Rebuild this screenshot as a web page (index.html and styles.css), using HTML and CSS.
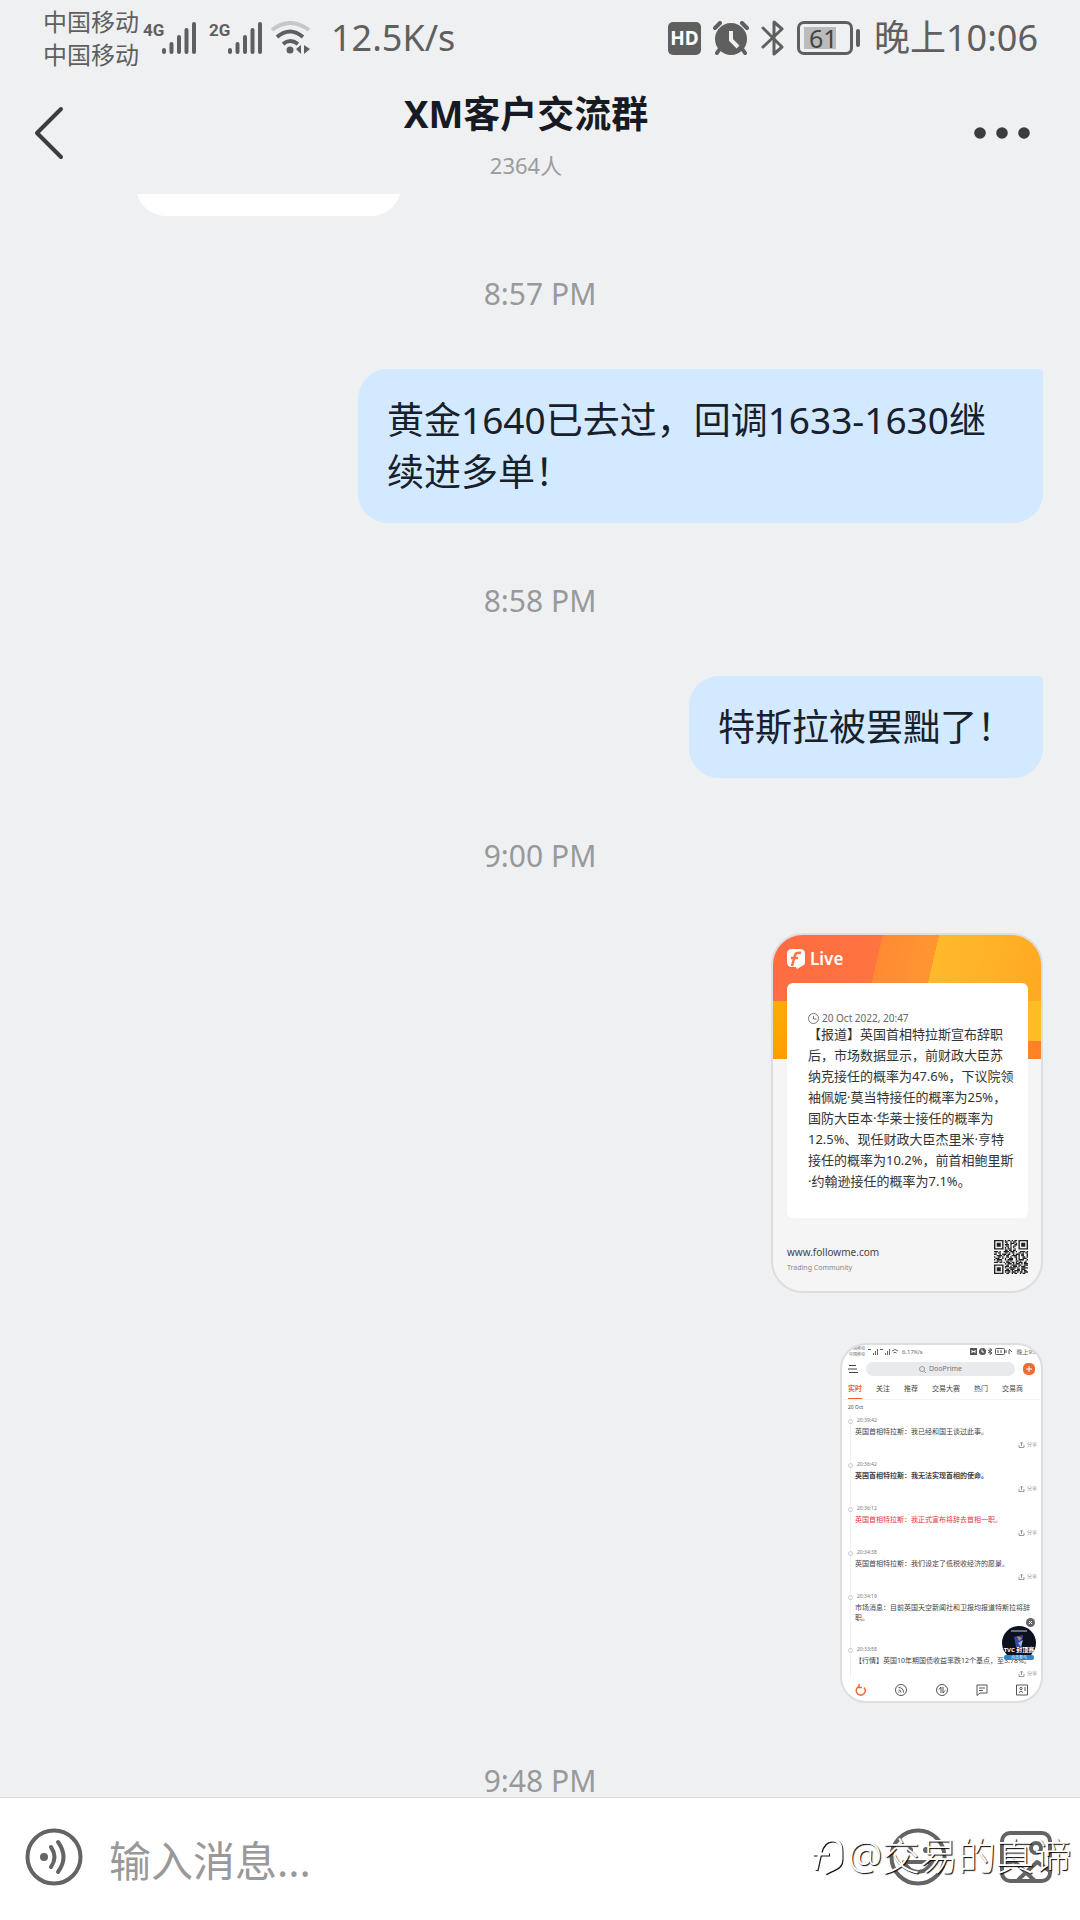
FILE: index.html
```html
<!DOCTYPE html>
<html lang="zh-CN">
<head>
<meta charset="utf-8">
<meta name="viewport" content="width=device-width, initial-scale=1">
<title>XM客户交流群</title>
<link rel="stylesheet" href="styles.css">
</head>
<body>
<div class="status">
  <div class="carriers"><span>中国移动</span><span>中国移动</span></div>
  <svg class="signal" width="54" height="34" viewBox="0 0 54 34" aria-hidden="true"><text x="0" y="15">4G</text><g class="bars"><path d="M21 29v2M28.500 23v8M36 16v15M43.500 9v22M51 3v28"/></g></svg>
  <svg class="signal second" width="54" height="34" viewBox="0 0 54 34" aria-hidden="true"><text x="0" y="15">2G</text><g class="bars"><path d="M21 29v2M28.500 23v8M36 16v15M43.500 9v22M51 3v28"/></g></svg>
  <svg class="wifi" width="40" height="34" viewBox="0 0 40 34" fill="none" stroke="#5f5f5f" stroke-width="4" aria-hidden="true"><path d="M1 9Q19-5 38 9" stroke="#c6c7c8"/><path d="M6 16Q19 5 32 16M12 23Q19 17 27 23"/><circle cx="19" cy="29" r="3.500" fill="#5f5f5f" stroke="none"/><path d="M30 24v9l-5-5zM33 24v9l6-5z" fill="#5f5f5f" stroke="none"/></svg>
  <span class="speed">12.5K/s</span>
  <div class="status-right">
    <span class="hd">HD</span>
    <svg width="36" height="34" viewBox="0 0 36 34" aria-hidden="true"><circle cx="18" cy="18" r="16" fill="#5f5f5f"/><path d="M2 7l5-5M34 7l-5-5M6 29l-2 3M30 29l2 3" stroke="#5f5f5f" stroke-width="4" stroke-linecap="round"/><path d="M18 10v9l7 7" fill="none" stroke="#eff0f2" stroke-width="4"/></svg>
    <svg width="24" height="36" viewBox="0 0 24 36" fill="none" stroke="#5f5f5f" stroke-width="3" stroke-linejoin="round" stroke-linecap="round" aria-hidden="true"><path d="M2 8l19 19-8 7V2l8 7L2 27"/></svg>
    <div class="battery"><span class="cell">61</span><i></i></div>
    <span class="clock">晚上10:06</span>
  </div>
</div>

<header class="header">
  <button class="back" aria-label="返回"><svg width="30" height="54" viewBox="0 0 30 54" fill="none" stroke="#3c3c3c" stroke-width="4" stroke-linecap="round" stroke-linejoin="round"><path d="M27 3L3 27l24 24"/></svg></button>
  <div class="heading"><h1>XM客户交流群</h1><p>2364人</p></div>
  <button class="more" aria-label="更多"><svg width="56" height="12" viewBox="0 0 56 12" fill="#3c3c3c"><circle cx="6" cy="6" r="5.800"/><circle cx="28" cy="6" r="5.800"/><circle cx="50" cy="6" r="5.800"/></svg></button>
</header>

<main class="chat">
  <div class="incoming"></div>
  <time>8:57 PM</time>
  <p class="bubble">黄金1640已去过，回调1633-1630继续进多单！</p>
  <time>8:58 PM</time>
  <p class="bubble">特斯拉被罢黜了！</p>
  <time>9:00 PM</time>

  <article class="live">
    <div class="live-brand">
      <svg width="18" height="20" viewBox="0 0 18 20" aria-hidden="true"><path d="M5 0h8q5 0 5 5v8q0 3-3 4l-5 3-1-2H5q-5 0-5-5V5q0-5 5-5z" fill="#fff"/><path d="M5 17l3-11q1-3 6-2M4 9h7" fill="none" stroke="#ff7440" stroke-width="2.500"/></svg>
      <span>Live</span>
    </div>
    <div class="live-panel">
      <div class="live-date"><svg width="11" height="11" viewBox="0 0 11 11" fill="none" stroke="#777" aria-hidden="true"><circle cx="5.500" cy="5.500" r="5"/><path d="M5.500 3v3h3"/></svg><span>20 Oct 2022, 20:47</span></div>
      <p>【报道】英国首相特拉斯宣布辞职<br>后，市场数据显示，前财政大臣苏<br>纳克接任的概率为47.6%，下议院领<br>袖佩妮·莫当特接任的概率为25%，<br>国防大臣本·华莱士接任的概率为<br>12.5%、现任财政大臣杰里米·亨特<br>接任的概率为10.2%，前首相鲍里斯<br>·约翰逊接任的概率为7.1%。</p>
    </div>
    <div class="live-foot">
      <div><a href="#">www.followme.com</a><small>Trading Community</small></div>
      <svg width="34" height="34" viewBox="0 0 25 25" aria-hidden="true" fill="none" stroke="#222">
        <g><path d="M8 .5h9" stroke-dasharray="1 1 2 1"/><path d="M8 1.500h9" stroke-dasharray="2 2 1 1"/><path d="M9 2.500h8" stroke-dasharray="1 2 3 1"/><path d="M8 3.500h9" stroke-dasharray="3 1 1 2"/><path d="M9 4.500h8" stroke-dasharray="2 1 1 1"/><path d="M8 5.500h8" stroke-dasharray="1 1"/><path d="M8 6.500h9" stroke-dasharray="1 1 3 2"/><path d="M8 7.500h8" stroke-dasharray="2 1"/>
        <path d="M0 8.500h25" stroke-dasharray="3 1 1 2 4 1"/><path d="M1 9.500h24" stroke-dasharray="1 1 2 3 2 1"/><path d="M0 10.500h25" stroke-dasharray="2 2 1 1 3 1"/><path d="M2 11.500h23" stroke-dasharray="4 1 1 1 2 2"/><path d="M0 12.500h25" stroke-dasharray="1 2 2 1"/><path d="M1 13.500h24" stroke-dasharray="3 2 1 1 1 2"/><path d="M0 14.500h25" stroke-dasharray="1 1 4 2"/><path d="M2 15.500h22" stroke-dasharray="2 1 1 3"/><path d="M0 16.500h25" stroke-dasharray="3 1 2 1 1 1"/>
        <path d="M8 17.500h17" stroke-dasharray="1 1 3 1"/><path d="M9 18.500h16" stroke-dasharray="2 2 4 1"/><path d="M8 19.500h16" stroke-dasharray="3 1 1 1"/><path d="M8 20.500h17" stroke-dasharray="1 2 5 1"/><path d="M9 21.500h16" stroke-dasharray="2 1 3 2"/><path d="M8 22.500h16" stroke-dasharray="4 1 1 1"/><path d="M8 23.500h17" stroke-dasharray="1 1 2 1 3 1"/><path d="M9 24.500h15" stroke-dasharray="2 2 1 1"/></g>
        <path d="M.5.500h6v6h-6zM18.500.500h6v6h-6zM.5 18.500h6v6h-6z"/><path d="M2 2h3v3H2zM20 2h3v3h-3zM2 20h3v3H2z" fill="#222" stroke="none"/>
      </svg>
    </div>
  </article>

  <article class="shot">
    <div class="shot-status">
      <div class="shot-carriers"><span>中国移动</span><span>中国移动</span></div>
      <svg width="31" height="7" viewBox="0 0 31 7" fill="none" stroke="#666" aria-hidden="true"><path d="M0 1.500h3M5.500 7V5M7.500 7V3M9.500 7V1M12 1.500h3M17.500 7V5M19.500 7V3M21.500 7V1M24 3q3-3 6 0M25.500 5q1.500-1.500 3 0"/></svg>
      <span>6.17K/s</span>
      <svg class="shot-icons" width="44" height="7" viewBox="0 0 44 7" fill="none" stroke="#555" aria-hidden="true"><path d="M0 0h7v7H0z" fill="#555" stroke="none"/><path d="M2 2v3M5 2v3M2 3.500h3" stroke="#fff"/><circle cx="12.500" cy="3.500" r="3.500" fill="#555" stroke="none"/><path d="M12 1.500v2.500h2" stroke="#fff"/><path d="M18 2l4 3-2 1.500v-6L22 2l-4 3"/><rect x="25.500" y=".5" width="9" height="6" rx="1"/><path d="M28 2v3M31 2v3M36 2v3M39 1l3 3M39 6V2"/></svg>
      <span>晚上9:0</span>
    </div>
    <div class="shot-search">
      <svg width="10" height="10" viewBox="0 0 10 10" stroke="#444" aria-hidden="true"><path d="M1 1.500h7M0 5h9M1 8.500h9"/></svg>
      <div class="shot-field"><svg width="7" height="7" viewBox="0 0 7 7" fill="none" stroke="#999" aria-hidden="true"><circle cx="3" cy="3" r="2.500"/><path d="M5 5l2 2"/></svg><span>DooPrime</span></div>
      <span class="plus"><svg width="12" height="12" viewBox="0 0 12 12" aria-hidden="true"><rect width="12" height="12" rx="5" fill="#f36b32"/><path d="M6 3v6M3 6h6" stroke="#fff"/></svg></span>
    </div>
    <nav class="shot-tabs"><b>实时</b><span>关注</span><span>推荐</span><span>交易大赛</span><span>热门</span><span>交易商</span></nav>
    <div class="shot-day">20 Oct</div>
    <ul class="feed">
      <li><i>20:39:42</i><p>英国首相特拉斯：我已经和国王谈过此事。</p><span class="share"><svg width="7" height="7" viewBox="0 0 7 7"><path d="M1 4v2.500h5V4M3.500 5V1M2 2.500L3.500 1 5 2.500"/></svg>分享</span></li>
      <li><i>20:36:42</i><p class="strong">英国首相特拉斯：我无法实现首相的使命。</p><span class="share"><svg width="7" height="7" viewBox="0 0 7 7"><path d="M1 4v2.500h5V4M3.500 5V1M2 2.500L3.500 1 5 2.500"/></svg>分享</span></li>
      <li><i>20:36:12</i><p class="alert">英国首相特拉斯：我正式宣布将辞去首相一职。</p><span class="share"><svg width="7" height="7" viewBox="0 0 7 7"><path d="M1 4v2.500h5V4M3.500 5V1M2 2.500L3.500 1 5 2.500"/></svg>分享</span></li>
      <li><i>20:34:38</i><p>英国首相特拉斯：我们设定了低税收经济的愿景。</p><span class="share"><svg width="7" height="7" viewBox="0 0 7 7"><path d="M1 4v2.500h5V4M3.500 5V1M2 2.500L3.500 1 5 2.500"/></svg>分享</span></li>
      <li class="long"><i>20:34:19</i><p>市场消息：目前英国天空新闻社和卫报均报道特斯拉将辞职。</p></li>
      <li><i>20:33:58</i><p class="one">【行情】英国10年期国债收益率跌12个基点，至3.78%。</p><span class="share"><svg width="7" height="7" viewBox="0 0 7 7"><path d="M1 4v2.500h5V4M3.500 5V1M2 2.500L3.500 1 5 2.500"/></svg>分享</span></li>
    </ul>
    <div class="shot-nav">
      <svg viewBox="0 0 12 12" aria-hidden="true"><path d="M4 2.500a4.500 4.500 0 1 0 5 1M4 0v3.500h3" stroke="#ee6a3c" stroke-width="1.500"/></svg>
      <svg viewBox="0 0 12 12" aria-hidden="true"><circle cx="6" cy="6" r="5.500"/><path d="M3.500 3.500q5 0 5 5M3.500 6q2.500 0 2.500 2.500M3.500 8h1"/></svg>
      <svg viewBox="0 0 12 12" aria-hidden="true"><circle cx="6" cy="6" r="5.500"/><path d="M5 9V3L3 5.500M7 3v6l2-2.500"/></svg>
      <svg viewBox="0 0 12 12" aria-hidden="true"><path d="M1 1h10v8H4l-3 2.500zM3 4h6M3 6.500h4"/></svg>
      <svg viewBox="0 0 12 12" aria-hidden="true"><path d="M.5 1h11v10H.500zM3 8.500q2-3 4 0M8 4h2M8 6h2"/><circle cx="5" cy="4.500" r="1.200"/></svg>
    </div>
    <div class="promo"><svg width="34" height="34" viewBox="0 0 34 34" aria-hidden="true"><circle cx="17" cy="17" r="17" fill="#0c1120"/><path d="M9 5h16" stroke="#ccc"/><path d="M12 11l9-2-2 13-5-1z" fill="#314a9b"/><path d="M15 10l5 2-3 3z" fill="#df7b68"/><path d="M16 17l5-3-2 7z" fill="#91bde8"/></svg><b>TVC 封顶赛</b><em>点击参与</em></div>
    <svg class="promo-close" width="9" height="9" viewBox="0 0 9 9" aria-hidden="true"><circle cx="4.500" cy="4.500" r="4.500" fill="#666"/><path d="M3 3l3 3M6 3L3 6" stroke="#fff"/></svg>
  </article>
  <time>9:48 PM</time>
</main>

<footer class="composer">
  <button aria-label="语音"><svg width="58" height="58" viewBox="0 0 58 58" fill="none" stroke="#646464" stroke-width="4" stroke-linecap="round"><circle cx="29" cy="29" r="26.500"/><circle cx="19" cy="29" r="4" fill="#646464" stroke="none"/><path d="M26 19q7 10 0 20M33 14q11 15 0 30"/></svg></button>
  <input type="text" aria-label="输入消息" placeholder="输入消息...">
  <button aria-label="表情"><svg width="58" height="58" viewBox="0 0 58 58" fill="none" stroke="#646464" stroke-width="4" stroke-linecap="round"><circle cx="29" cy="29" r="26.500"/><circle cx="21" cy="22" r="3" fill="#646464" stroke="none"/><circle cx="37" cy="22" r="3" fill="#646464" stroke="none"/><path d="M15 34h28q-5 10-14 10t-14-10"/></svg></button>
  <button aria-label="图片"><svg width="52" height="52" viewBox="0 0 52 52" fill="none" stroke="#646464" stroke-width="4" stroke-linejoin="round"><rect x="2" y="2" width="48" height="48" rx="8"/><circle cx="36" cy="17" r="5"/><path d="M2 35l12-5 21 20M18 49l19-18 13 9"/></svg></button>
  <div class="watermark"><svg width="34" height="44" viewBox="0 0 34 44" fill="none" aria-hidden="true"><path d="M5 38l4-18q3-12 12-12 9 0 9 11v8q0 7-8 10l-8 4M2 22h16" stroke="#111" stroke-width="3"/><path d="M4 37l4-18q3-12 12-12 9 0 9 11v8q0 7-8 10l-8 4M1 21h16" stroke="#fff" stroke-width="3"/></svg><span>@交易的真谛</span></div>
</footer>
</body>
</html>
```
FILE: styles.css
```css
* { box-sizing: border-box; }
body {
  margin: 0;
  min-height: 100vh;
  display: flex;
  flex-direction: column;
  background: #eff0f2;
  color: #17202b;
  font-family: "Noto Sans", "Noto Sans CJK SC", sans-serif;
}
h1, p, ul { margin: 0; padding: 0; }
button { border: 0; padding: 0; background: none; display: flex; align-items: center; }
svg { display: block; flex: none; }

.status {
  height: 76px;
  padding: 3px 42px 3px 43px;
  display: flex;
  align-items: center;
  color: #5f5f5f;
  font-size: 36px;
  line-height: 40px;
  white-space: nowrap;
}
.carriers { display: flex; flex-direction: column; font-size: 24px; line-height: 33px; }
.signal { margin-left: 4px; fill: #5f5f5f; font-size: 17px; font-weight: 700; font-family: "Liberation Sans Narrow", "Roboto", sans-serif; }
.second { margin-left: 12px; }
.bars { stroke: #5f5f5f; stroke-width: 4; stroke-linecap: round; }
.wifi { margin-left: 8px; }
.speed { margin-left: 20px; }
.status-right { margin-left: auto; display: flex; align-items: center; gap: 12px; }
.hd {
  width: 33px; height: 33px; border-radius: 5px;
  background: #5f5f5f; color: #fff;
  font-size: 19px; font-weight: 700; line-height: 33px; text-align: center;
}
.battery { display: flex; align-items: center; gap: 3px; margin-right: 2px; }
.cell {
  width: 56px; height: 34px; padding-left: 9px;
  border: 3px solid #5f5f5f; border-radius: 7px;
  background: linear-gradient(#bbb, #bbb) 4px 3px / 32px 22px no-repeat;
  color: #444; font-size: 25px; line-height: 28px;
}
.battery i { width: 4px; height: 18px; border-radius: 2px; background: #5f5f5f; }

.header { height: 118px; display: grid; grid-template-columns: 96px 1fr 124px; }
.back { padding-left: 34px; padding-bottom: 4px; }
.more { padding-left: 18px; padding-bottom: 4px; }
.heading { text-align: center; padding-top: 12px; }
.heading h1 { font-size: 37px; line-height: 52px; color: #171a22; }
.heading p { margin-top: 10px; font-size: 22px; line-height: 30px; color: #9b9c9e; }

.chat {
  flex: 1;
  padding: 0 37px;
  overflow: hidden;
  display: flex;
  flex-direction: column;
  align-items: flex-end;
}
.incoming { align-self: flex-start; width: 265px; height: 72px; margin: -50px 0 0 99px; border-radius: 30px; background: #fff; }
.chat > time { align-self: center; margin: 62px 0 59px; font-size: 30px; line-height: 32px; color: #98999b; }
.chat > time:last-child { margin-bottom: 0; }
.bubble {
  max-width: 685px;
  padding: 25px 29px 25px;
  border-radius: 30px 4px 30px 30px;
  background: #d2e9ff;
  font-size: 37px;
  line-height: 52px;
}

.live {
  width: 272px; height: 360px;
  margin-top: 2px;
  padding: 0 13px 0 14px;
  border: 2px solid #dddee0;
  border-radius: 32px;
  background:
    linear-gradient(#ffab08, #ff9f00) left 66px / 14px 58px no-repeat,
    linear-gradient(#ffbd25 0 40px, #ff8229 40px) right 66px / 14px 58px no-repeat,
    linear-gradient(103deg, #ff6b42, #ff7440 37%, #ff8a34 37%, #ff9630 56%, #ffb92b 56%, #ffa722) 0 0 / 100% 124px no-repeat,
    #f5f5f5;
}
.live-brand { height: 48px; display: flex; align-items: center; gap: 5px; color: #fff; font-size: 17px; font-weight: 600; line-height: 20px; }
.live-panel { height: 235px; padding: 29px 0 0 21px; border-radius: 6px; background: #fff; color: #333; }
.live-date { display: flex; align-items: center; gap: 3px; font-size: 10px; line-height: 12px; color: #666; }
.live-panel p { font-size: 13px; line-height: 21px; white-space: nowrap; }
.live-foot { padding-top: 22px; display: flex; justify-content: space-between; font-size: 10px; line-height: 14px; }
.live-foot a { display: block; margin-top: 5px; color: #444; text-decoration: none; }
.live-foot small { display: block; margin-top: 3px; font-size: 7px; line-height: 12px; color: #888; }

.shot {
  position: relative;
  width: 203px; height: 360px;
  margin-top: 50px;
  border: 2px solid #dddee0;
  border-radius: 26px;
  background: #fff;
  overflow: hidden;
  display: flex;
  flex-direction: column;
  color: #444;
  font-size: 7px;
  line-height: 10px;
}
.shot > * { flex: none; }
.shot-status { height: 15px; padding: 0 4px 2px 7px; display: flex; align-items: center; gap: 3px; color: #666; font-size: 6px; white-space: nowrap; }
.shot-carriers { display: flex; flex-direction: column; font-size: 4px; line-height: 6px; }
.shot-icons { margin-left: auto; }
.shot-search { height: 18px; padding: 0 6px; display: flex; align-items: center; gap: 8px; }
.shot-field { flex: 1; height: 14px; border-radius: 7px; background: #e9eaec; display: flex; align-items: center; justify-content: center; gap: 3px; color: #777; }
.shot-tabs { height: 22px; padding: 6px 6px 0; display: flex; gap: 14px; white-space: nowrap; border-bottom: 1px solid #f4f4f4; }
.shot-tabs b { color: #ee6426; border-bottom: 1px solid #ee6426; }
.shot-day { padding-left: 6px; font-size: 5px; line-height: 15px; }
.feed { list-style: none; margin-left: 8px; padding: 0 4px 0 4px; border-left: 1px solid #f0f0f0; }
.feed li { margin-bottom: 10px; display: flex; flex-direction: column; }
.feed li:last-child { margin-bottom: 0; }
.feed .long { margin-bottom: 19px; }
.feed i { font-style: normal; font-size: 5px; color: #777; }
.feed i::before { content: ""; float: left; width: 3px; height: 3px; margin: 4px 4px 0 -7px; border: 1px solid #ccc; border-radius: 50%; }
.feed p { padding: 2px 0; }
.feed .strong { font-weight: 700; }
.feed .alert { color: #e5343d; }
.feed .one { white-space: nowrap; }
.share { align-self: flex-end; display: flex; align-items: center; gap: 2px; font-size: 5px; color: #999; }
.share svg { fill: none; stroke: #999; }
.shot-nav { height: 24px; padding: 0 13px; display: flex; align-items: center; justify-content: space-between; }
.shot-nav svg { width: 12px; height: 12px; fill: none; stroke: #555; }
.promo { position: absolute; right: 5px; bottom: 41px; width: 34px; color: #fff; text-align: center; }
.promo b { position: absolute; left: 0; right: 0; top: 20px; font-size: 6px; line-height: 8px; white-space: nowrap; }
.promo em { position: absolute; left: 2px; right: 2px; bottom: 0; background: #2c86c8; border-radius: 2px; font-size: 4px; line-height: 5px; font-style: normal; }
.promo-close { position: absolute; right: 6px; bottom: 74px; }

.composer {
  position: relative;
  height: 123px;
  padding: 0 28px 4px 25px;
  border-top: 1px solid #d8d9db;
  background: #fff;
  display: flex;
  align-items: center;
}
.composer input {
  flex: 1;
  min-width: 0;
  margin: 8px 24px 0 26px;
  padding: 0;
  border: 0;
  outline: 0;
  background: none;
  color: #17202b;
  font: 42px/60px "Noto Sans", "Noto Sans CJK SC", sans-serif;
}
.composer input::placeholder { color: #999; opacity: 1; }
.composer button:last-of-type { margin-left: 53px; }
.watermark {
  position: absolute; right: 8px; top: 31px;
  display: flex; align-items: center; gap: 2px;
  color: #fff; font-size: 38px; line-height: 52px; font-weight: 300; white-space: nowrap;
  text-shadow: 1px 1px 1px #000;
  pointer-events: none;
}
```
